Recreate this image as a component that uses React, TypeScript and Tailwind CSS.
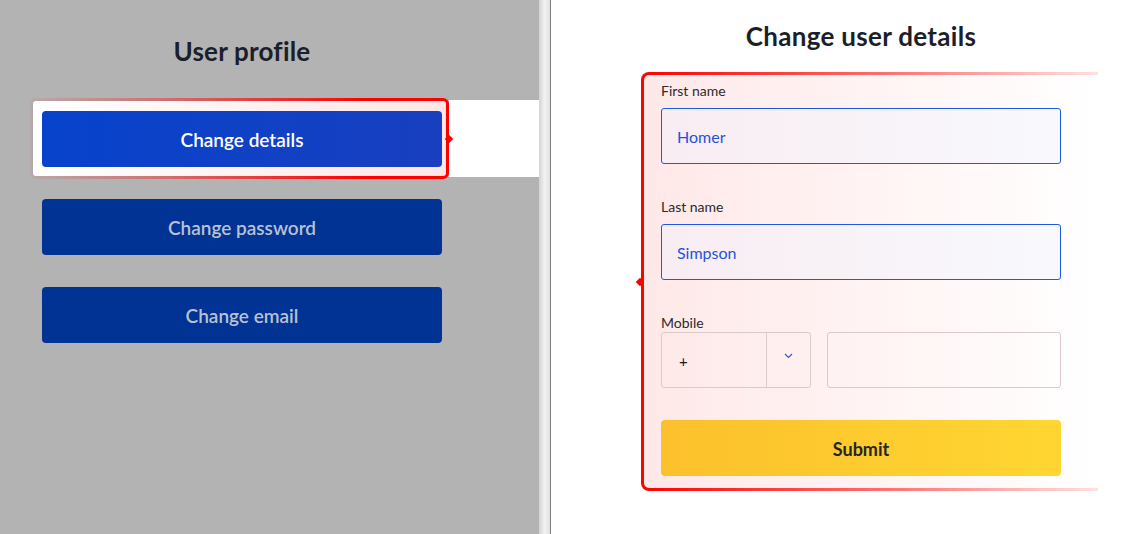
import { useState } from "react";

function Chevron() {
  return (
    <svg width="9" height="6" viewBox="0 0 9 6" fill="none" className="text-[#2f5be0]">
      <path d="M1 1l3.5 3.5L8 1" stroke="currentColor" strokeWidth="1.2" />
    </svg>
  );
}

export default function App() {
  const [first, setFirst] = useState("Homer");
  const [last, setLast] = useState("Simpson");

  const items = [
    { title: "Change details", active: true },
    { title: "Change password", active: false },
    { title: "Change email", active: false },
  ];

  return (
    <div className="flex h-[534px] w-full overflow-hidden bg-white font-['Lato',sans-serif]">
      {/* left menu */}
      <aside className="w-[539px] shrink-0 bg-[#b3b3b3] pt-[35px]">
        <h1 className="w-[484px] text-center text-[26px] leading-8 font-bold tracking-[0.2px] text-[#1b1f2b]">
          User profile
        </h1>

        {/* active item, highlighted */}
        <div className="mt-[31px] flex items-center">
          <div className="relative ml-[30px] w-[419px] rounded-md border-[3px] border-transparent pt-[10px] pr-[4px] pb-[9px] pl-[9px] [background:linear-gradient(to_right,#fff,#ffe6e6)_padding-box,linear-gradient(to_right,rgba(255,0,0,0.05),rgba(255,0,0,0.35)_30%,#f00_80%)_border-box]">
            <button className="flex h-[56px] w-[400px] items-center justify-center rounded-[4px] bg-[linear-gradient(to_right,#0743cc,#183fbf)] pt-[3px] text-[19px] font-semibold text-white">
              {items[0].title}
            </button>
            <span className="absolute top-1/2 -right-[6px] h-[6px] w-[6px] -translate-y-1/2 rotate-45 bg-[#f00]" />
          </div>
          <div className="h-[77px] flex-1 bg-white" />
        </div>

        <div className="mt-[20px] ml-[42px] flex flex-col gap-[32px]">
          {items.slice(1).map((item) => (
            <button
              key={item.title}
              className="flex h-[56px] w-[400px] items-center justify-center rounded-[4px] bg-[#003393] pt-[3px] text-[19px] font-semibold text-[#b9c1d2]"
            >
              {item.title}
            </button>
          ))}
        </div>
      </aside>

      {/* scrollbar strip */}
      <div className="w-[12px] shrink-0 border-r border-[#7d7d7d] bg-[linear-gradient(to_right,#d3d3d3,#f2f2f2_50%,#e2e2e2)]" />

      {/* form */}
      <main className="flex-1 pt-[20px] pl-[90px]">
        <h2 className="w-[457px] pr-[37px] pl-[20px] text-center text-[26px] leading-8 font-bold tracking-[0.3px] text-[#1b1f2b]">
          Change user details
        </h2>

        <div className="relative mt-[20px] w-[457px] rounded-l-lg border-[3px] border-r-0 border-transparent pt-[8px] pb-[12px] pl-[17px] [background:linear-gradient(to_right,#ffe8e8,#fff)_padding-box,linear-gradient(to_right,#f00,rgba(255,0,0,0.55)_55%,rgba(255,0,0,0.12))_border-box]">
          <span className="absolute top-1/2 -left-[7px] h-[6px] w-[6px] -translate-y-1/2 rotate-45 bg-[#f00]" />

          <label className="block text-[14px] leading-4 text-[#2b2b2b]">First name</label>
          <input
            value={first}
            onChange={(e) => setFirst(e.target.value)}
            className="mt-[9px] block h-[56px] w-[400px] rounded-[3px] border border-[#1a5ae6] bg-[#eef2ff]/40 pl-[15px] text-[16px] text-[#2452dc] outline-none"
          />

          <label className="mt-[35px] block text-[14px] leading-4 text-[#2b2b2b]">Last name</label>
          <input
            value={last}
            onChange={(e) => setLast(e.target.value)}
            className="mt-[9px] block h-[56px] w-[400px] rounded-[3px] border border-[#1a5ae6] bg-[#eef2ff]/40 pl-[15px] text-[16px] text-[#2452dc] outline-none"
          />

          <label className="mt-[35px] block text-[14px] leading-4 text-[#2b2b2b]">Mobile</label>
          <div className="mt-[1px] flex">
            <div className="flex h-[56px] w-[150px] rounded-[3px] border border-[#dccaca]">
              <div className="flex w-[105px] items-center border-r border-[#dccaca] pt-[3px] pl-[17px] text-[15px] text-[#1b1b1b]">
                +
              </div>
              <div className="flex flex-1 justify-center pt-[20px]">
                <Chevron />
              </div>
            </div>
            <input className="ml-[16px] block h-[56px] w-[234px] rounded-[3px] border border-[#dccaca] bg-transparent outline-none" />
          </div>

          <button className="mt-[32px] flex h-[56px] w-[400px] items-center justify-center rounded-[4px] bg-[linear-gradient(to_right,#fcc02c,#ffd631)] pt-[2px] text-[18px] font-bold text-[#262626]">
            Submit
          </button>
        </div>
      </main>
    </div>
  );
}
